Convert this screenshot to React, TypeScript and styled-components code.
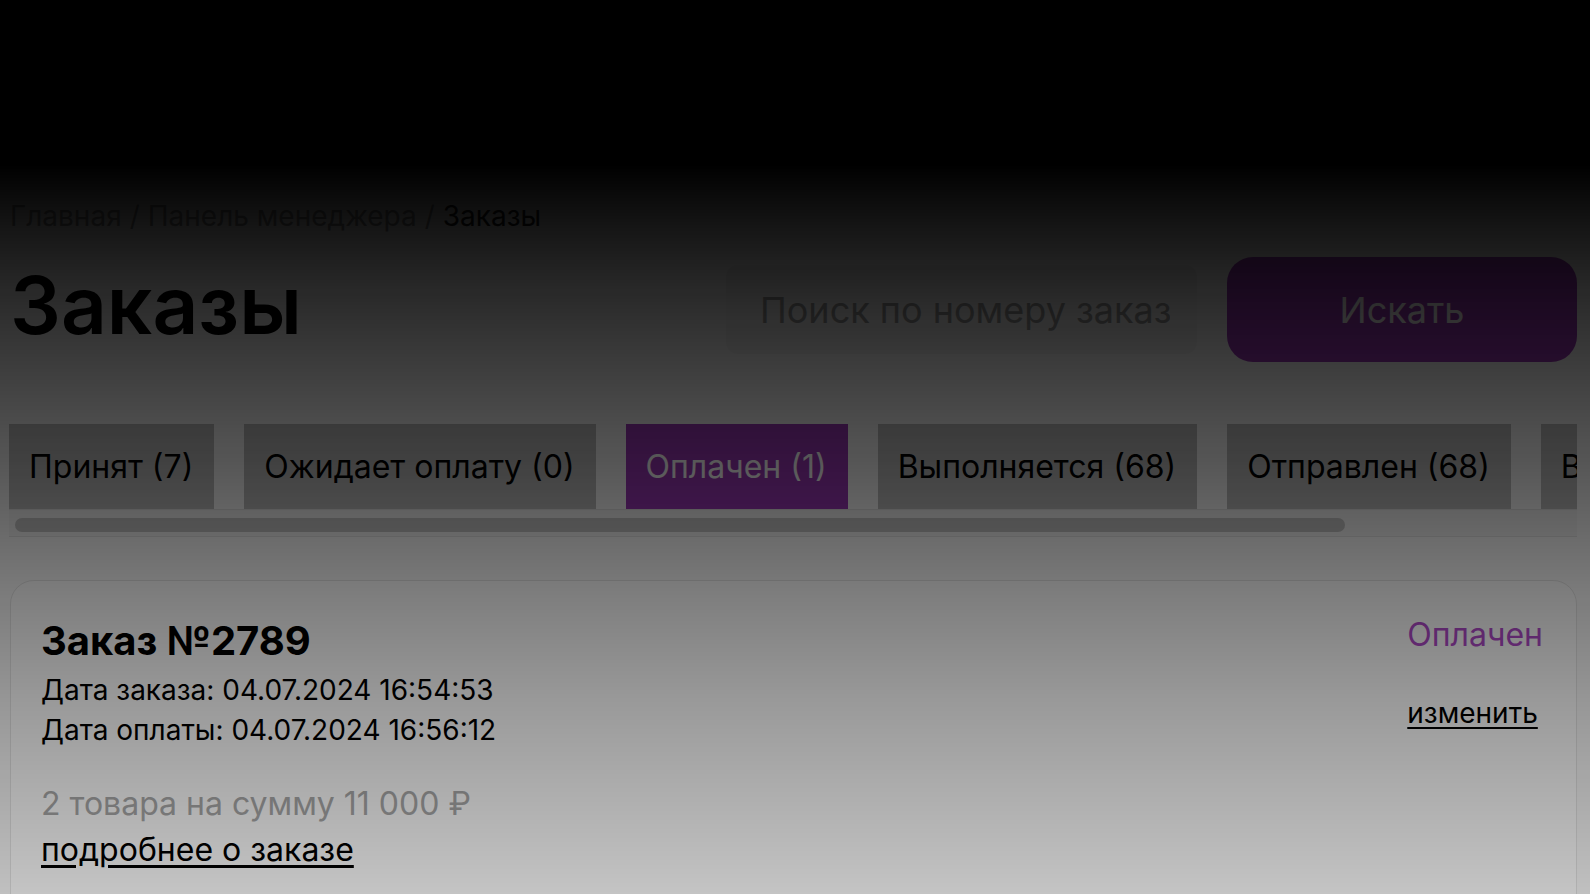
import React from 'react';
import styled, { createGlobalStyle } from "styled-components";

const GlobalStyle = createGlobalStyle`
    html, body {
        margin: 0;
        padding: 0;
        background: #fafafa;
        font-family: Inter, "Noto Sans", "Liberation Sans", sans-serif;
        color: #000;
    }
    * {
        box-sizing: border-box;
    }
`

type TabType = {
    title: string
    count: number
    active?: boolean
}

const tabs: TabType[] = [
    {title: "Принят", count: 7},
    {title: "Ожидает оплату", count: 0},
    {title: "Оплачен", count: 1, active: true},
    {title: "Выполняется", count: 68},
    {title: "Отправлен", count: 68},
    {title: "Выполнен", count: 68},
]

const OrderCard = () => {
    return (
        <Card>
            <CardInfo>
                <OrderTitle>Заказ №2789</OrderTitle>
                <OrderDate>Дата заказа: 04.07.2024 16:54:53</OrderDate>
                <OrderDate>Дата оплаты: 04.07.2024 16:56:12</OrderDate>
                <OrderSum>2 товара на сумму 11 000 ₽</OrderSum>
                <OrderLink href={"#"}>подробнее о заказе</OrderLink>
            </CardInfo>
            <CardStatus>
                <Status>Оплачен</Status>
                <ChangeLink href={"#"}>изменить</ChangeLink>
            </CardStatus>
        </Card>
    );
};

export default function App() {
    return (
        <>
            <GlobalStyle/>
            <Page>
                <Breadcrumbs>
                    <Crumb href={"#"}>Главная</Crumb>
                    <Separator>/</Separator>
                    <Crumb href={"#"}>Панель менеджера</Crumb>
                    <Separator>/</Separator>
                    <Crumb current>Заказы</Crumb>
                </Breadcrumbs>
                <TitleRow>
                    <Title>Заказы</Title>
                    <SearchForm onSubmit={e => e.preventDefault()}>
                        <SearchInput placeholder="Поиск по номеру заказа"/>
                        <SearchButton type="submit">Искать</SearchButton>
                    </SearchForm>
                </TitleRow>
                <TabsWrapper>
                    <Tabs>
                        {tabs.map(t => (
                            <Tab key={t.title} active={t.active}>{t.title} ({t.count})</Tab>
                        ))}
                    </Tabs>
                    <ScrollTrack>
                        <ScrollThumb/>
                    </ScrollTrack>
                </TabsWrapper>
                <OrderCard/>
            </Page>
            <Shade/>
        </>
    );
}

const Page = styled.main`
    padding: 200px 13px 0 10px;
    height: 894px;
    overflow: hidden;
`

const Breadcrumbs = styled.nav`
    display: flex;
    gap: 8px;
    font-size: 28px;
    line-height: 32px;
    color: #8f8f8f;
`

const Crumb = styled.a<{ current?: boolean }>`
    color: ${props => props.current ? "#222" : "#8f8f8f"};
    text-decoration: none;
`

const Separator = styled.span`
    color: #8f8f8f;
`

const TitleRow = styled.div`
    display: flex;
    align-items: center;
    justify-content: space-between;
    margin-top: 25px;
    height: 105px;
`

const Title = styled.h1`
    margin: -9px 0 0 0;
    font-size: 80px;
    line-height: 80px;
    font-weight: 600;
`

const SearchForm = styled.form`
    display: flex;
    align-items: center;
    gap: 30px;
`

const SearchInput = styled.input`
    width: 471px;
    height: 89px;
    padding: 0 27px 0 34px;
    border: none;
    border-radius: 12px;
    background: #f1f1f1;
    font-family: inherit;
    font-size: 36px;
    outline: none;

    &::placeholder {
        color: #9a9a9a;
    }
`

const SearchButton = styled.button`
    width: 350px;
    height: 105px;
    border: none;
    border-radius: 26px;
    background: #9c38b8;
    color: #fff;
    font-family: inherit;
    font-size: 36px;
    cursor: pointer;
`

const TabsWrapper = styled.div`
    margin: 62px 0 0 -1px;
`

const Tabs = styled.div`
    display: flex;
    gap: 30px;
    overflow-x: auto;
    scrollbar-width: none;

    &::-webkit-scrollbar {
        display: none;
    }
`

const Tab = styled.button<{ active?: boolean }>`
    flex: none;
    height: 85px;
    padding: 0 21px 0 20px;
    border: none;
    border-radius: 0;
    background: ${props => props.active ? "#9c38b8" : "#bdbdbd"};
    color: ${props => props.active ? "#fff" : "#000"};
    font-family: inherit;
    font-size: 32px;
    white-space: nowrap;
    cursor: pointer;
`

const ScrollTrack = styled.div`
    height: 28px;
    padding: 8px 0 4px 6px;
    background: #f3f3f3;
    border-top: 1px solid #e2e2e2;
    border-bottom: 1px solid #e2e2e2;
`

const ScrollThumb = styled.div`
    width: 1330px;
    height: 14px;
    border-radius: 7px;
    background: #c4c4c4;
`

const Card = styled.section`
    display: flex;
    justify-content: space-between;
    margin-top: 43px;
    padding: 36px 33px 80px 30px;
    background: #fff;
    border: 1px solid #e6e6e6;
    border-radius: 24px;
`

const CardInfo = styled.div`
    display: flex;
    flex-direction: column;
    align-items: flex-start;
`

const OrderTitle = styled.h2`
    margin: 0 0 5px;
    font-size: 40px;
    line-height: 48px;
    font-weight: 700;
`

const OrderDate = styled.p`
    margin: 0;
    font-size: 28px;
    line-height: 40px;
`

const OrderSum = styled.p`
    margin: 31px 0 0;
    font-size: 32px;
    line-height: 46px;
    color: #ababab;
`

const OrderLink = styled.a`
    font-size: 32px;
    line-height: 46px;
    color: #000;
    text-decoration: underline;
    text-underline-offset: 4px;
`

const CardStatus = styled.div`
    display: flex;
    flex-direction: column;
    align-items: flex-start;
`

const Status = styled.span`
    margin-top: 2px;
    font-size: 32px;
    line-height: 32px;
    color: #b24ccc;
`

const ChangeLink = styled.a`
    margin-top: 44px;
    font-size: 28px;
    line-height: 36px;
    color: #000;
    text-decoration: underline;
    text-underline-offset: 4px;
`

const Shade = styled.div`
    position: fixed;
    inset: 0;
    pointer-events: none;
    background: linear-gradient(
        to bottom,
        rgba(0, 0, 0, 1) 0px,
        rgba(0, 0, 0, 1) 165px,
        rgba(0, 0, 0, 0.93) 217px,
        rgba(0, 0, 0, 0.82) 307px,
        rgba(0, 0, 0, 0.66) 460px,
        rgba(0, 0, 0, 0.5) 600px,
        rgba(0, 0, 0, 0.4) 700px,
        rgba(0, 0, 0, 0.23) 894px
    );
`
